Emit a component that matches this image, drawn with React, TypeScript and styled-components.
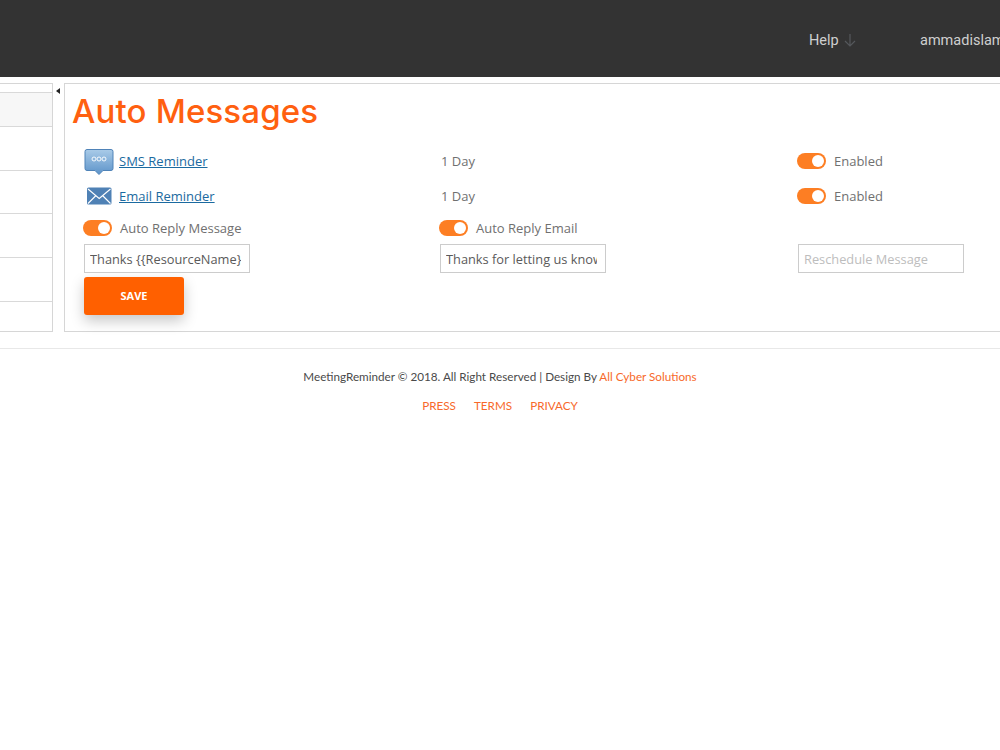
import * as React from 'react'
import styled, { createGlobalStyle } from 'styled-components'

const GlobalStyle = createGlobalStyle`
	html, body {
		margin: 0;
		padding: 0;
		background: #ffffff;
		overflow: hidden;
	}
	* {
		box-sizing: border-box;
	}
`

const SmsIcon = () => (
	<svg width="30" height="28" viewBox="0 -1 30 28">
		<defs>
			<linearGradient id="smsFill" x1="0" y1="0" x2="0" y2="1">
				<stop offset="0" stopColor="#a9cbe8" />
				<stop offset="1" stopColor="#5d93c9" />
			</linearGradient>
		</defs>
		<path
			d="M3 1.5h24a2 2 0 0 1 2 2v17a2 2 0 0 1-2 2h-8l-4 4-4-4H3a2 2 0 0 1-2-2v-17a2 2 0 0 1 2-2z"
			fill="url(#smsFill)"
			stroke="#4f83b8"
		/>
		<circle cx="10" cy="11" r="2" fill="none" stroke="#ffffff" strokeWidth="0.9" />
		<circle cx="15" cy="11" r="2" fill="none" stroke="#ffffff" strokeWidth="0.9" />
		<circle cx="20" cy="11" r="2" fill="none" stroke="#ffffff" strokeWidth="0.9" />
	</svg>
)

const MailIcon = () => (
	<svg width="30" height="18" viewBox="0 0 30 18">
		<rect x="3" y="0.5" width="24.500" height="17" rx="1.5" fill="#4f81b5" />
		<path d="M4 2l11.200 9.500L26.500 2M4 16.500l8-8M26.500 16.500l-8-8" fill="none" stroke="#ffffff" strokeWidth="1.100" />
	</svg>
)

const HelpArrow = () => (
	<svg width="12" height="14" viewBox="0 0 12 14">
		<path d="M6 1v12M1 8l5 5 5-5" fill="none" stroke="#55585c" strokeWidth="1.200" />
	</svg>
)

export default function App(): JSX.Element {
	return (
		<Page>
			<GlobalStyle />
			<Header>
				<NavItem $width={111}>
					Help <HelpArrow />
				</NavItem>
				<NavItem $width={80}>ammadislam</NavItem>
			</Header>

			<Main>
				<SidePanel>
					<SideRow $height={9} />
					<SideRow $height={34} $shaded />
					<SideRow $height={44} />
					<SideRow $height={44} />
					<SideRow $height={44} />
					<SideRow $height={44} />
					<SideRow $height={29} $last />
				</SidePanel>

				<Gutter>
					<CollapseArrow />
				</Gutter>

				<ContentPanel>
					<Title>Auto Messages</Title>
					<SettingsGrid>
						<Cell $height={35}>
							<IconSlot>
								<SmsIcon />
							</IconSlot>
							<ReminderLink href="#">SMS Reminder</ReminderLink>
						</Cell>
						<Cell $height={35}>
							<Label $indent={2}>1 Day</Label>
						</Cell>
						<Cell $height={35}>
							<Toggle />
							<Label>Enabled</Label>
						</Cell>

						<Cell $height={35}>
							<IconSlot>
								<MailIcon />
							</IconSlot>
							<ReminderLink href="#">Email Reminder</ReminderLink>
						</Cell>
						<Cell $height={35}>
							<Label $indent={2}>1 Day</Label>
						</Cell>
						<Cell $height={35}>
							<Toggle />
							<Label>Enabled</Label>
						</Cell>

						<Cell $height={30}>
							<Toggle />
							<Label>Auto Reply Message</Label>
						</Cell>
						<Cell $height={30}>
							<Toggle />
							<Label>Auto Reply Email</Label>
						</Cell>
						<Cell $height={30} />

						<InputCell>
							<MessageInput defaultValue="Thanks {{ResourceName}}" />
						</InputCell>
						<InputCell>
							<MessageInput defaultValue="Thanks for letting us know" />
						</InputCell>
						<InputCell>
							<MessageInput placeholder="Reschedule Message" />
						</InputCell>
					</SettingsGrid>
					<SaveButton>SAVE</SaveButton>
				</ContentPanel>
			</Main>

			<Footer>
				<Copyright>
					MeetingReminder © 2018. All Right Reserved | Design By <FooterLink href="#">All Cyber Solutions</FooterLink>
				</Copyright>
				<FooterNav>
					<FooterLink href="#">PRESS</FooterLink>
					<FooterLink href="#">TERMS</FooterLink>
					<FooterLink href="#">PRIVACY</FooterLink>
				</FooterNav>
			</Footer>
		</Page>
	)
}

const Page = styled.div`
	width: 1000px;
	height: 750px;
	overflow: hidden;
	background: #ffffff;
	font-family: 'Open Sans', 'Noto Sans', sans-serif;
`
const Header = styled.header`
	height: 77px;
	background: #333333;
	display: flex;
	justify-content: flex-end;
	align-items: center;
	padding-top: 3px;
	overflow: hidden;
`
const NavItem = styled.div<{ $width: number }>`
	flex: 0 0 ${(p) => p.$width}px;
	min-width: 0;
	white-space: nowrap;
	display: flex;
	align-items: center;
	gap: 5px;
	font-family: Roboto, sans-serif;
	font-size: 14.500px;
	color: #cfcfcf;
`
const Main = styled.main`
	display: flex;
	align-items: stretch;
	padding-top: 6px;
	height: 255px;
`
const SidePanel = styled.aside`
	flex: 0 0 53px;
	border: 1px solid #d6d6d6;
	border-left: none;
	display: flex;
	flex-direction: column;
`
const SideRow = styled.div<{ $height: number; $shaded?: boolean; $last?: boolean }>`
	height: ${(p) => p.$height}px;
	background: ${(p) => (p.$shaded ? '#f7f7f7' : '#ffffff')};
	border-bottom: ${(p) => (p.$last ? 'none' : '1px solid #d9d9d9')};
`
const Gutter = styled.div`
	flex: 0 0 11px;
	display: flex;
	justify-content: center;
	padding: 5px 2px 0 0;
`
const CollapseArrow = styled.div`
	width: 0;
	height: 0;
	border-style: solid;
	border-width: 3px 4px 3px 0;
	border-color: transparent #222222 transparent transparent;
`
const ContentPanel = styled.section`
	flex: 1;
	border: 1px solid #d6d6d6;
	border-right: none;
	padding: 7px 0 0 7px;
`
const Title = styled.h1`
	margin: 0 0 12px;
	font-family: Inter, sans-serif;
	font-size: 33px;
	letter-spacing: 0.150px;
	line-height: 40px;
	font-weight: 500;
	color: #ff6010;
`
const SettingsGrid = styled.div`
	display: grid;
	grid-template-columns: 356px 358px 1fr;
	margin-left: 11px;
`
const Cell = styled.div<{ $height: number }>`
	height: ${(p) => p.$height}px;
	display: flex;
	align-items: center;
	font-size: 13px;
`
const InputCell = styled.div`
	height: 34px;
	padding: 1px 0 4px 1px;
`
const IconSlot = styled.span`
	flex: 0 0 36px;
	display: flex;
	align-items: center;
	padding-left: 1px;
`
const ReminderLink = styled.a`
	color: #1b6aa0;
	text-decoration: underline;
	font-size: 13px;
`
const Label = styled.span<{ $indent?: number }>`
	margin-left: ${(p) => p.$indent ?? 0}px;
	color: #707070;
	font-size: 13px;
`
const Toggle = styled.span`
	flex: 0 0 29px;
	height: 16px;
	margin-right: 8px;
	border-radius: 8px;
	background: #fd7e23;
	display: flex;
	justify-content: flex-end;
	align-items: center;
	padding-right: 2px;

	&::after {
		content: '';
		width: 12px;
		height: 12px;
		border-radius: 50%;
		background: #ffffff;
	}
`
const MessageInput = styled.input`
	width: 166px;
	height: 29px;
	padding: 0 8px 0 5px;
	border: 1px solid #cccccc;
	border-radius: 0;
	outline: none;
	font-family: 'Open Sans', 'Noto Sans', sans-serif;
	font-size: 12.800px;
	color: #5a5a5a;

	&::placeholder {
		color: #bdbdbd;
		opacity: 1;
	}
`
const SaveButton = styled.button`
	display: block;
	width: 100px;
	height: 38px;
	margin-left: 12px;
	padding: 0 0 2px;
	border: none;
	border-radius: 3px;
	background: #ff6000;
	color: #ffffff;
	font-family: 'Open Sans', sans-serif;
	font-size: 11px;
	font-weight: 700;
	box-shadow: 0 6px 14px rgba(0, 0, 0, 0.22);
`
const Footer = styled.footer`
	margin-top: 16px;
	padding-top: 20px;
	border-top: 1px solid #e8e8e8;
	text-align: center;
	font-family: Lato, sans-serif;
	font-size: 11.700px;
	color: #4a4a4a;
`
const Copyright = styled.div`
	line-height: 14px;
`
const FooterNav = styled.nav`
	display: flex;
	justify-content: center;
	gap: 18px;
	margin-top: 15px;
	line-height: 14px;
`
const FooterLink = styled.a`
	color: #f7692a;
	text-decoration: none;
`
